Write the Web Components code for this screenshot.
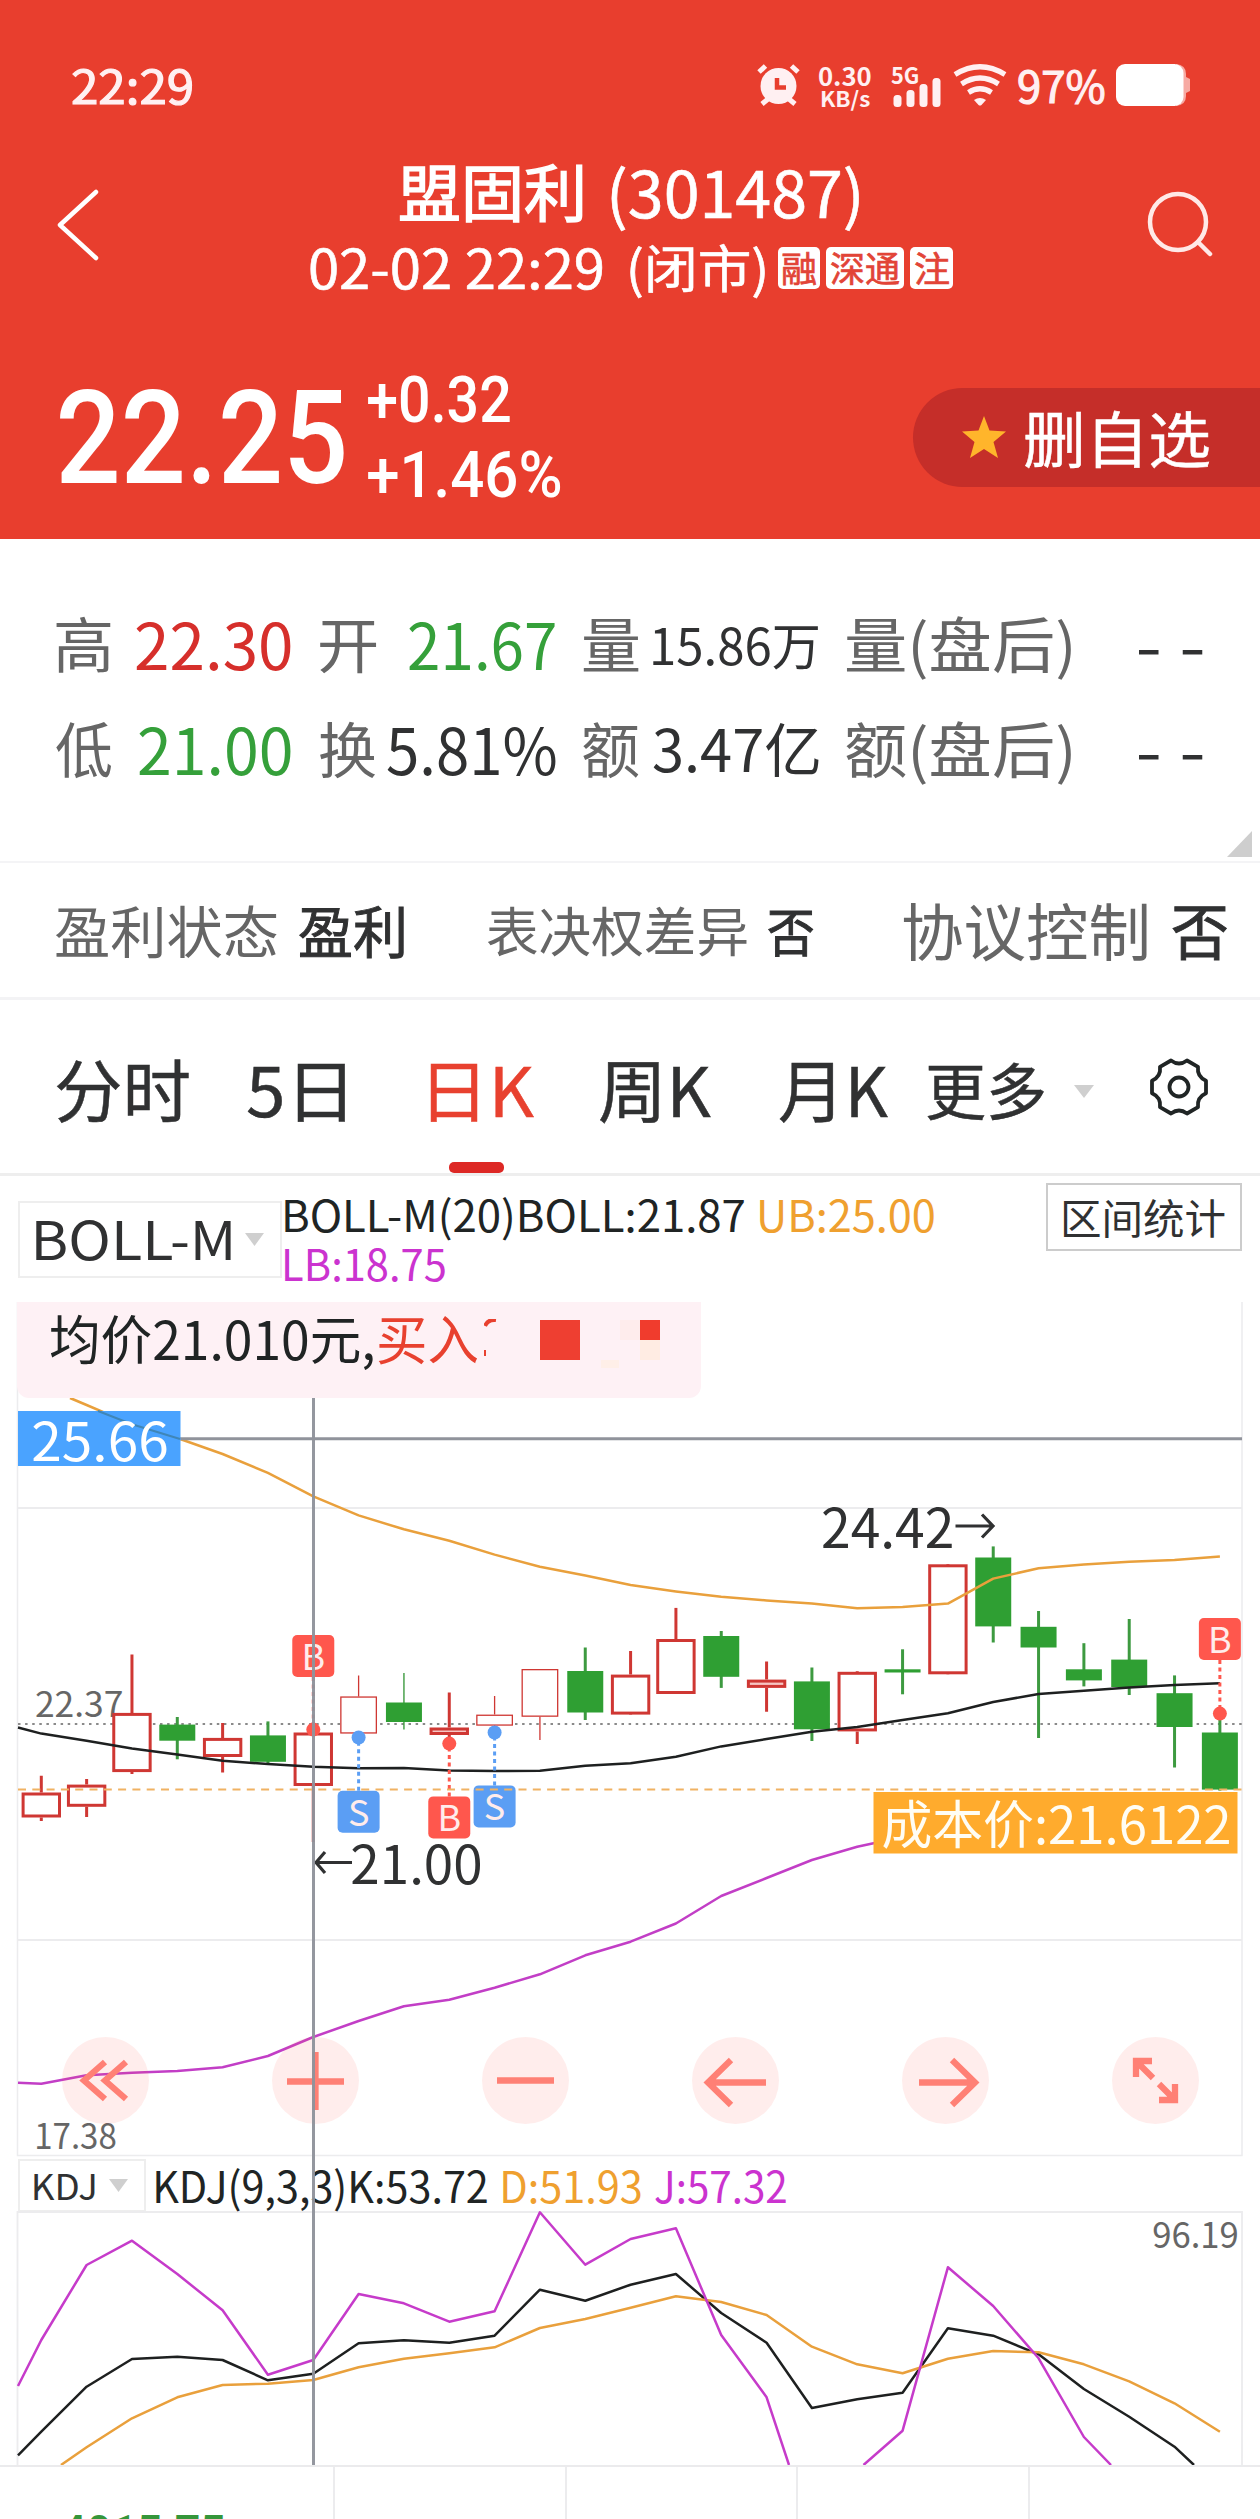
<!DOCTYPE html>
<html lang="zh-CN">
<head>
<meta charset="utf-8">
<title>盟固利 301487</title>
<style>
  html, body { margin: 0; padding: 0; }
  body {
    width: 1260px;
    height: 2519px;
    overflow: hidden;
    background: #fff;
    color: #303132;
    font-family: "Noto Sans CJK SC", "Noto Sans", sans-serif;
  }
</style>
</head>
<body>
<stock-page></stock-page>

<script>
// Text squeezed or stretched so that its ink is exactly "w" pixels wide
const measureCtx = document.createElement("canvas").getContext("2d");

class FitText extends HTMLElement {
  constructor() {
    super();
    this.attachShadow({ mode: "open" });
    this.shadowRoot.innerHTML = `
      <style>
        :host { display: block; flex: none; line-height: 1; white-space: nowrap; }
        span {
          display: inline-block;
          vertical-align: top;
          transform-origin: 0 50%;
        }
      </style>
      <span><slot></slot></span>
    `;
  }

  connectedCallback() {
    const width = parseFloat(this.getAttribute("w"));
    const gap = parseFloat(this.getAttribute("gap")) || 0;
    const size = this.getAttribute("size");
    if (size) this.style.fontSize = `${size}px`;
    if (gap) this.style.marginLeft = `${gap}px`;
    this.style.width = `${width}px`;

    const style = getComputedStyle(this);
    measureCtx.font = `${style.fontWeight} ${style.fontSize} ${style.fontFamily}`;
    const m = measureCtx.measureText(this.textContent);
    const scale = width / (m.actualBoundingBoxRight + m.actualBoundingBoxLeft);
    const shift = m.actualBoundingBoxLeft * scale;
    const lift = style.fontFamily.startsWith("Roboto") ? 0.012 : -0.045;
    this.shadowRoot.querySelector("span").style.transform =
      `translate(${shift}px, ${lift}em) scaleX(${scale})`;
  }
}
customElements.define("fit-text", FitText);

// Small helper: an element whose shadow root is a fixed template
function defineStatic(name, html) {
  const template = document.createElement("template");
  template.innerHTML = html;
  customElements.define(name, class extends HTMLElement {
    constructor() {
      super();
      this.attachShadow({ mode: "open" });
      this.shadowRoot.appendChild(template.content.cloneNode(true));
    }
  });
}

// Phone status bar
defineStatic("status-bar", `
  <style>
    :host {
      display: flex;
      align-items: center;
      height: 42px;
      padding: 64px 70px 0 72px;
      color: #fff0f2;
    }
    .mid { -webkit-text-stroke: 1.200px currentColor; }
    .right { display: flex; align-items: flex-start; margin-left: auto; height: 42px; }
    .rate { display: flex; flex-direction: column; margin-left: 19px; width: 53px; font-weight: 700; }
    .signal { margin-left: 19px; width: 51px; font-weight: 700; }
    .signal svg { display: block; margin-top: -9px; }
    .wifi { margin-left: 11px; }
    .battery { margin-left: 12px; }
    svg { display: block; flex: none; }
  </style>
  <fit-text class="mid" w="120" size="47">22:29</fit-text>
  <div class="right">
    <svg width="43" height="42" viewBox="0 0 43 42" fill="none" stroke="#fff0f2">
      <path d="M11 35 5 40M32 35l6 5M2 8 8.500 2M34.500 2 41 8" stroke-width="5"/>
      <circle cx="21.500" cy="22" r="18" fill="#fff0f2" stroke="none"/>
      <path d="M20 14v9.500h9" stroke="#e83e2e" stroke-width="4.500"/>
    </svg>
    <div class="rate">
      <fit-text w="52" size="25">0.30</fit-text>
      <fit-text w="49" size="21" gap="2">KB/s</fit-text>
    </div>
    <div class="signal">
      <fit-text w="27" size="23">5G</fit-text>
      <svg width="51" height="29" viewBox="0 0 51 29" fill="#fff0f2">
        <rect x="2.500" y="17" width="8" height="12" rx="3.500"/>
        <rect x="15.500" y="12" width="8" height="17" rx="3.500"/>
        <rect x="28.500" y="6" width="8" height="23" rx="3.500"/>
        <rect x="41.500" y="0" width="8" height="29" rx="3.500"/>
      </svg>
    </div>
    <svg class="wifi" width="54" height="42" viewBox="0 0 54 42" fill="none" stroke="#fff0f2" stroke-width="5.200">
      <path d="M2 10.500Q27-5 52 10.500M8.500 20Q27 8 45.500 20M15.500 28.500Q27 21 38.500 28.500"/>
      <path d="M21 36Q27 32 33 36L28.500 41Q27 42 25.500 41Z" fill="#fff0f2" stroke="none"/>
    </svg>
    <fit-text class="mid" w="86" size="44" gap="11">97%</fit-text>
    <svg class="battery" width="74" height="42" viewBox="0 0 74 42">
      <path d="M60 0q10 1 10 10v3l4 2v12l-4 2v3q0 9-10 10z" fill="#f7aaa3"/>
      <rect width="67.500" height="42" rx="9" fill="#fff"/>
    </svg>
  </div>
`);

// Red header: title, quote time and last price
defineStatic("quote-header", `
  <style>
    :host { display: block; height: 539px; background: #e83e2e; color: #fff; }
    .bar { display: flex; align-items: center; height: 237px; }
    .back { margin-left: 54px; }
    .search { margin-left: 191px; }
    svg { display: block; flex: none; }
    .title { width: 646px; margin-left: 208px; padding-top: 12px; }
    .line { display: flex; align-items: center; height: 75px; }
    .tag {
      display: flex; align-items: center; justify-content: center;
      height: 42px; margin-left: 6px;
      border-radius: 5px;
      background: #fff; color: #e24437;
      -webkit-text-stroke: 0.700px currentColor;
    }
    .quote { display: flex; align-items: center; height: 188px; padding: 0 0 8px 60px; font-family: Roboto, sans-serif; font-weight: 500; }
    .change { display: flex; flex-direction: column; gap: 10px; margin-left: 24px; }
    .fav {
      display: flex; align-items: center;
      box-sizing: border-box; width: 347px; height: 99px; margin-left: auto; padding-left: 49px;
      border-radius: 50px 0 0 50px;
      background: #c52e29;
      font-family: "Noto Sans CJK SC", sans-serif;
      font-weight: 400;
      -webkit-text-stroke: 0.500px currentColor;
    }
  </style>
  <status-bar></status-bar>
  <div class="bar">
    <svg class="back" width="48" height="74" viewBox="0 0 48 74" fill="none" stroke="#fff" stroke-width="4.500" stroke-linecap="round" stroke-linejoin="round"><path d="M42 4 6 37l36 33"/></svg>
    <div class="title">
      <div class="line">
        <fit-text w="182" size="62" gap="90" style="-webkit-text-stroke:1.500px currentColor">盟固利</fit-text>
        <fit-text w="248" size="64" gap="29" style="-webkit-text-stroke:0.600px currentColor">(301487)</fit-text>
      </div>
      <div class="line">
        <fit-text w="293" size="54" style="-webkit-text-stroke:0.600px currentColor">02-02 22:29</fit-text>
        <fit-text w="135" size="51" gap="27" style="-webkit-text-stroke:0.600px currentColor">(闭市)</fit-text>
        <span class="tag" style="width:42px;margin-left:13px"><fit-text w="34" size="35">融</fit-text></span>
        <span class="tag" style="width:78px"><fit-text w="68" size="35">深通</fit-text></span>
        <span class="tag" style="width:43px"><fit-text w="34" size="35">注</fit-text></span>
      </div>
    </div>
    <svg class="search" width="68" height="68" viewBox="0 0 68 68" fill="none" stroke="#ffe9e7" stroke-width="4.500" stroke-linecap="round"><circle cx="31" cy="31" r="28"/><path d="M51 51 63 63"/></svg>
  </div>
  <div class="quote">
    <fit-text w="284" size="130">22.25</fit-text>
    <div class="change">
      <fit-text w="142" size="65">+0.32</fit-text>
      <fit-text w="192" size="65">+1.46%</fit-text>
    </div>
    <div class="fav">
      <svg width="44" height="42" viewBox="0 0 44 42" fill="#ffb52b"><path d="M22 0 27.500 14.500 44 15.500 31.500 26 36 42 22 33 8 42 12.500 26 0 15.500 16.500 14.500Z"/></svg>
      <fit-text w="184" size="61" gap="19" style="padding-top:4px">删自选</fit-text>
    </div>
  </div>
`);

// High / low / open / volume figures
defineStatic("quote-stats", `
  <style>
    :host { display: block; position: relative; box-sizing: border-box; height: 322px; padding: 53px 0 0 56px; }
    .row { display: flex; align-items: center; height: 105px; color: #303132; }
    .k { color: #666; }
    .up { color: #d62f2b; }
    .down { color: #35a03a; }
    .more { position: absolute; right: 8px; bottom: 4px; }
  </style>
  <div class="row">
    <fit-text class="k" w="55" size="60">高</fit-text>
    <fit-text class="up" w="155" size="64" gap="25">22.30</fit-text>
    <fit-text class="k" w="56" size="60" gap="29">开</fit-text>
    <fit-text class="down" w="146" size="64" gap="33">21.67</fit-text>
    <fit-text class="k" w="56" size="60" gap="28">量</fit-text>
    <fit-text w="165" size="50" gap="14">15.86万</fit-text>
    <fit-text class="k" w="225" size="60" gap="28">量(盘后)</fit-text>
    <fit-text w="65" size="64" gap="67">- -</fit-text>
  </div>
  <div class="row">
    <fit-text class="k" w="56" size="60">低</fit-text>
    <fit-text class="down" w="152" size="64" gap="27">21.00</fit-text>
    <fit-text class="k" w="56" size="60" gap="29">换</fit-text>
    <fit-text w="169" size="64" gap="11">5.81%</fit-text>
    <fit-text class="k" w="56" size="60" gap="27">额</fit-text>
    <fit-text w="166" size="58" gap="14">3.47亿</fit-text>
    <fit-text class="k" w="225" size="60" gap="27">额(盘后)</fit-text>
    <fit-text w="65" size="64" gap="67">- -</fit-text>
  </div>
  <svg class="more" width="25" height="26"><path d="M25 0v26H0z" fill="#cecece"/></svg>
`);

defineStatic("company-flags", `
  <style>
    :host {
      display: flex; align-items: center;
      box-sizing: border-box; height: 139px; padding: 3px 0 0 55px;
      border-top: 2px solid #f4f4f6; border-bottom: 3px solid #f3f3f5;
      color: #303132;
    }
    .k { color: #666; }
    .v { -webkit-text-stroke: 1px currentColor; }
  </style>
  <fit-text class="k" w="222" size="56">盈利状态</fit-text>
  <fit-text class="v" w="105" size="56" gap="22">盈利</fit-text>
  <fit-text class="k" w="260" size="53" gap="83">表决权差异</fit-text>
  <fit-text class="v" w="45" size="52" gap="21">否</fit-text>
  <fit-text class="k" w="244" size="62" gap="90">协议控制</fit-text>
  <fit-text class="v" w="54" size="61" gap="26">否</fit-text>
`);

defineStatic("period-tabs", `
  <style>
    :host {
      display: flex; align-items: center; position: relative;
      box-sizing: border-box; height: 176px; padding: 9px 0 0 56px;
      border-bottom: 3px solid #eee;
      color: #303132;
      -webkit-text-stroke: 0.500px currentColor;
    }
    .on { color: #e8412f; }
    .on::after {
      content: "";
      position: absolute; left: 449px; bottom: 0;
      width: 55px; height: 11px; border-radius: 5px;
      background: #dd2825;
    }
    svg { display: block; flex: none; }
  </style>
  <fit-text w="133" size="68">分时</fit-text>
  <fit-text w="98" size="68" gap="58">5日</fit-text>
  <div class="on"><fit-text w="104" size="68" gap="85">日K</fit-text></div>
  <fit-text w="111" size="68" gap="66">周K</fit-text>
  <fit-text w="109" size="68" gap="68">月K</fit-text>
  <fit-text w="117" size="61" gap="39">更多</fit-text>
  <svg style="margin-left:30px" width="20" height="13"><path d="M0 0h20L10 13z" fill="#cfcfcf"/></svg>
  <svg style="margin-left:55px;margin-top:-8px" width="60" height="60" viewBox="-30 -30 60 60" fill="none" stroke="#202525" stroke-width="3.800" stroke-linejoin="round">
    <circle r="9.500"/>
    <path d="M-8-26.500Q0-20.500 8-26.500L19-20.200Q17.800-10.300 27-6.300V6.300Q17.800 10.300 19 20.200L8 26.500Q0 20.500-8 26.500L-19 20.200Q-17.800 10.300-27 6.300V-6.300Q-17.800-10.300-19-20.200Z"/>
  </svg>
`);

// Framed indicator name with a drop-down mark
class IndicatorSelect extends HTMLElement {
  constructor() {
    super();
    this.attachShadow({ mode: "open" });
    this.shadowRoot.innerHTML = `
      <style>
        :host {
          display: flex; align-items: center; flex: none;
          box-sizing: border-box;
          border: 2px solid #eee;
          background: #fff;
          color: #303132;
        }
        svg { display: block; margin-left: 14px; }
      </style>
      <slot></slot>
      <svg width="19" height="13"><path d="M0 0h19L9.500 13z" fill="#cfcfcf"/></svg>
    `;
  }
}
customElements.define("indicator-select", IndicatorSelect);

const PITCH = 45.33;
const FIRST_X = 41.3;
const RED = "#cf3733";
const GREEN = "#2f9f33";
const cx = (i) => FIRST_X + PITCH * i;

// ys holds one y value per candle, counted from "start"
function polyline(ys, color, start = 0, before = "", after = "", width = 2.5) {
  const pts = ys.map((y, i) => `${cx(i + start).toFixed(1)},${y}`).join(" ");
  return `<polyline points="${before} ${pts} ${after}" fill="none" stroke="${color}" stroke-width="${width}" stroke-linejoin="round"/>`;
}

function label(x, y, w, size, text, color = "#303132") {
  return `<text x="${x - size * 0.05}" y="${y}" font-size="${size}" fill="${color}" textLength="${w + size * 0.1}" lengthAdjust="spacingAndGlyphs">${text}</text>`;
}

// [kind, body top, body bottom, high, low]; r = red, g = green, t = thin red, G = green with a thin wick
const CANDLES = [
  ["r", 1792.5, 1817.5, 1775.7, 1821], ["r", 1784.6, 1806.8, 1779, 1817],
  ["r", 1712.9, 1772.1, 1654.6, 1774], ["g", 1724.6, 1740.7, 1717, 1759.3],
  ["r", 1737.9, 1757, 1723, 1772.5], ["g", 1735.4, 1761.8, 1721.4, 1763],
  ["r", 1732.5, 1786, 1732, 1842], ["t", 1696.4, 1733.6, 1675.4, 1733],
  ["G", 1702.5, 1722, 1673, 1729.6], ["r", 1727.5, 1735, 1692.5, 1737],
  ["t", 1714.6, 1725.7, 1696, 1725], ["t", 1669, 1716.8, 1669, 1740],
  ["g", 1671, 1712.5, 1647.5, 1720], ["r", 1674.6, 1714.6, 1651, 1714],
  ["r", 1639, 1694, 1607.9, 1694], ["g", 1636, 1676.8, 1631, 1687.9],
  ["r", 1679.6, 1687.9, 1661.4, 1711.8], ["g", 1681.4, 1729.3, 1667.5, 1741],
  ["r", 1671.8, 1731.4, 1671, 1744], ["g", 1669.3, 1672.5, 1649.3, 1694.3],
  ["r", 1564.3, 1674.3, 1565, 1674], ["g", 1557.5, 1626.4, 1546.4, 1642.5],
  ["g", 1626.8, 1647.5, 1611, 1738], ["g", 1669.3, 1680.4, 1643.2, 1686.4],
  ["g", 1659.6, 1687, 1619, 1695], ["g", 1693.2, 1727, 1675.4, 1767.5],
  ["g", 1732.5, 1789.6, 1718, 1790.7],
];

const BOLL_UP = [1405, 1424.3, 1438, 1454, 1472.9, 1496.4, 1515.4, 1529.3, 1540.7, 1554.6, 1566.8, 1575.4, 1585, 1591.4, 1596.8, 1600.4, 1603.6, 1608.2, 1607, 1603.6, 1578.6, 1568.2, 1564.6, 1561.8, 1560, 1556.4];
const BOLL_MID = [1733.6, 1740.7, 1748.6, 1754.6, 1760.7, 1764, 1766.8, 1768.2, 1767.9, 1770.4, 1771, 1770.7, 1765.7, 1763.2, 1756.8, 1746.4, 1739, 1731.8, 1727, 1720, 1713.2, 1702, 1694, 1690.7, 1687.5, 1685, 1683.2];
const BOLL_LOW = [2083.7, 2075.3, 2072.7, 2071, 2067.3, 2056, 2037, 2021, 2006.3, 1999.7, 1987.7, 1974.3, 1955.3, 1941.7, 1923.5, 1896, 1878, 1860, 1846.8, 1837];

// candle index, letter, badge top, dot y
const TRADES = [[6, "B", 1635, 1729.6], [7, "S", 1790.7, 1737.5], [9, "B", 1796.4, 1743.6], [10, "S", 1785.4, 1732.5], [26, "B", 1618, 1713.6]];

function candle([kind, top, bottom, high, low], i) {
  const x = cx(i);
  if (kind === "g" || kind === "G") {
    const wick = kind === "G" ? 1.4 : 3;
    return `<path d="M${x} ${high}V${low}" stroke="#3d9a40" stroke-width="${wick}"/>
      <rect x="${x - 18}" y="${top}" width="36" height="${bottom - top}" fill="${GREEN}"/>`;
  }
  const sw = kind === "t" ? 1.3 : 3;
  const half = (kind === "t" ? 36.8 : 39.4) / 2;
  const fill = bottom - top < 9 ? "#f6c5c2" : "#fff";
  return `<path d="M${x} ${high}V${top}M${x} ${bottom}V${low}" stroke="${RED}" stroke-width="${sw}"/>
    <rect x="${x - half + sw / 2}" y="${top + sw / 2}" width="${half * 2 - sw}" height="${bottom - top - sw}" fill="${fill}" stroke="${RED}" stroke-width="${sw}"/>`;
}

function trade([i, letter, top, dot]) {
  const x = cx(i);
  const color = letter === "B" ? "#ff574d" : "#5b9ef4";
  const from = top < dot ? top + 42 : top;
  return `<path d="M${x} ${from}V${dot}" stroke="${color}" stroke-width="3" stroke-dasharray="4 3.500"/>
    <circle cx="${x}" cy="${dot}" r="7" fill="${color}"/>
    <rect x="${x - 21}" y="${top}" width="42" height="42" rx="5" fill="${color}"/>
    <text x="${x}" y="${top + 35}" font-size="36" text-anchor="middle" fill="#ffeceb">${letter}</text>`;
}

class KlineChart extends HTMLElement {
  constructor() {
    super();
    this.attachShadow({ mode: "open" });
    this.shadowRoot.innerHTML = `
      <style>
        :host { display: block; position: relative; height: 857px; }
        svg { display: block; flex: none; }
        .tip {
          position: absolute; left: 17px; top: 0;
          box-sizing: border-box; width: 684px; height: 96px;
          display: flex; align-items: flex-start; padding: 11px 0 0 33px;
          border-radius: 0 0 12px 12px;
          background: #fef1f5;
        }
        .tip .buy { color: #e8412f; }
        .tools {
          position: absolute; left: 62px; top: 734.500px; width: 1137px;
          display: flex; justify-content: space-between;
        }
        .tools svg { border-radius: 50%; background: rgba(253, 90, 80, 0.11); }
      </style>
      <svg width="1260" height="857" viewBox="0 1302 1260 857" font-family="'Noto Sans CJK SC', sans-serif">
        <path d="M17.500 1302V2155.500H1242V1302" fill="none" stroke="#ececee" stroke-width="1.500"/>
        <path d="M18 1508H1242M18 1940H1242" stroke="#ececee" stroke-width="2"/>
        <path d="M18 1724H1242" stroke="#8a8a8a" stroke-width="2" stroke-dasharray="2.500 4.600"/>
        ${label(36.7, 1717, 85, 35, "22.37", "#666")}
        ${CANDLES.map(candle).join("")}
        ${polyline(BOLL_MID, "#1e2020", 0, "18,1727.500")}
        ${polyline(BOLL_UP, "#e9a03c", 1, "70,1398")}
        ${polyline(BOLL_LOW, "#c23ec6", 0, "18,2082.700")}
        ${TRADES.map(trade).join("")}
        <path d="M18 1789.500H1242" stroke="#f0b263" stroke-width="2" stroke-dasharray="8 6.300"/>
        <path d="M180 1438.700H1242" stroke="#90939b" stroke-width="3"/>
        <rect x="18" y="1411" width="162.500" height="55" fill="#4aa3ff"/>
        <path d="M98 1411 132 1424.300 180 1439" fill="none" stroke="#3f86b8" stroke-width="2"/>
        ${label(34, 1461, 132, 53, "25.66", "#fff")}
        ${label(823.7, 1547.5, 128, 54, "24.42")}
        <path d="M955.500 1526H993M982 1514.500 993 1526 982 1537.500M352 1862.500H316M325 1852 316 1862.500 325 1873" fill="none" stroke="#303132" stroke-width="3.200"/>
        ${label(353, 1884, 127, 53, "21.00")}
        <rect x="873.500" y="1792" width="364" height="61.500" fill="#ffab2d"/>
        ${label(884, 1844, 345, 52, "成本价:21.6122", "#fffdf4")}
        ${label(36, 2149, 79, 35, "17.38", "#666")}
      </svg>
      <div class="tip">
        <fit-text w="323" size="53">均价21.010元,</fit-text>
        <fit-text class="buy" w="100" size="53" gap="5">买入</fit-text>
        <svg style="margin:6px 0 0 6px" width="180" height="60" fill="none">
          <path d="M1 7Q4 0 12 1" stroke="#e8412f" stroke-width="4"/>
          <path d="M1 31v6" stroke="#e8412f" stroke-width="2"/>
          <path d="M56 1h40v40H56z" fill="#ee3f31"/>
          <path d="M136 1h20v20h-20z" fill="#feecec"/>
          <path d="M156 1h20v20h-20z" fill="#f03c2d"/>
          <path d="M156 21h20v20h-20z" fill="#ffece3"/>
          <path d="M117 41h18v8h-18z" fill="#ffefe8"/>
        </svg>
      </div>
      <div class="tools">${this.tools()}</div>
    `;
  }

  tools() {
    const icons = [
      "M43 25 22 43.500 43 62M64 25 43 43.500 64 62",
      "M43.500 15V73M15 44.500H72",
      "M15 43.500H72",
      "M39 23 16 45.500 39 68M16 45.500H74",
      "M50 23 73 45.500 50 68M73 45.500H17",
      "M41 41 24 24M24 40V24H40M47 47 63 63M63 47V63H47",
    ];
    return icons.map((d) => `
      <svg width="87" height="87" viewBox="0 0 87 87" fill="none" stroke="#ff8075" stroke-width="6.300"><path d="${d}"/></svg>`).join("");
  }
}
customElements.define("kline-chart", KlineChart);

const J1 = [2340, 2265, 2240.7, 2274, 2310.3, 2374.7, 2360, 2294, 2303.3, 2321.7, 2311.3, 2212.3, 2264.7, 2239, 2228.3, 2335, 2397.3];
const J2 = [2430.7, 2267.3, 2306, 2358.3, 2437];
const K = [2431.7, 2386.7, 2359, 2356.7, 2360, 2380.3, 2373.7, 2343.3, 2340.3, 2342.7, 2335.7, 2289.7, 2300.7, 2284.7, 2274, 2313, 2342.7, 2408, 2399.3, 2392.7, 2328.3, 2335.7, 2354.3, 2389, 2416.7, 2446.7];
const D = [2447.3, 2418.3, 2397.3, 2385, 2383.7, 2380, 2367.3, 2358.7, 2353.3, 2347.3, 2328, 2319, 2307.7, 2296.3, 2302, 2315, 2346.7, 2364.3, 2373.3, 2358.7, 2351, 2352.3, 2364.3, 2381.3, 2403.3, 2431.7];

class KdjChart extends HTMLElement {
  constructor() {
    super();
    this.attachShadow({ mode: "open" });
    this.shadowRoot.innerHTML = `
      <style>
        :host { display: block; border-bottom: 2px solid #ebebed; }
        .legend { display: flex; align-items: center; height: 52px; padding-left: 18px; font-size: 43px; }
        .legend > fit-text { padding-top: 2px; }
        .d { color: #efa02f; }
        .j { color: #cb33cf; }
        svg { display: block; }
      </style>
      <div class="legend">
        <indicator-select style="width:128px;height:53px;padding-left:14px"><fit-text w="61" size="35" style="padding-top:2px">KDJ</fit-text></indicator-select>
        <fit-text w="331" gap="10">KDJ(9,3,3)K:53.72</fit-text>
        <fit-text class="d" w="138" gap="16">D:51.93</fit-text>
        <fit-text class="j" w="131" gap="14">J:57.32</fit-text>
      </div>
      <svg width="1260" height="254" viewBox="0 2211 1260 254" font-family="'Noto Sans CJK SC', sans-serif">
        <path d="M17.500 2465V2212H1242V2465" fill="none" stroke="#ececee" stroke-width="1.800"/>
        ${polyline(K, "#1e2020", 0, "18,2455.300", "1194,2465")}
        ${polyline(D, "#e9a03c", 1, "61,2465")}
        ${polyline(J1, "#c63bca", 0, "18,2386", "789,2465")}
        ${polyline(J2, "#c63bca", 19, "863.500,2465", "1111,2465")}
        ${label(1154, 2248, 83, 36, "96.19", "#666")}
      </svg>
    `;
  }
}
customElements.define("kdj-chart", KdjChart);

defineStatic("chart-panel", `
  <style>
    :host { display: block; position: relative; color: #202424; }
    .head { display: flex; align-items: flex-start; height: 126px; font-size: 43px; }
    .legend { display: flex; flex-wrap: wrap; width: 761px; padding: 18px 0 0 3px; }
    .row { display: flex; height: 49px; width: 100%; }
    .ub { color: #efa02f; }
    .lb { color: #cb33cf; }
    .range {
      display: flex; align-items: center; justify-content: center;
      box-sizing: border-box; width: 196px; height: 68px; margin-top: 7px;
      padding-top: 2px;
      border: 2px solid #ccc;
      color: #303132;
    }
    /* crosshair runs through both charts */
    .cross { position: absolute; left: 312px; top: 222px; bottom: 2px; width: 3px; background: #90939b; opacity: 0.96; }
  </style>
  <div class="head">
    <indicator-select style="width:264px;height:77px;margin:25px 0 0 18px;padding-left:16px"><fit-text w="195" size="53">BOLL-M</fit-text></indicator-select>
    <div class="legend">
      <div class="row"><fit-text w="459">BOLL-M(20)BOLL:21.87</fit-text><fit-text class="ub" w="174" gap="16">UB:25.00</fit-text></div>
      <div class="row"><fit-text class="lb" w="160">LB:18.75</fit-text></div>
    </div>
    <div class="range"><fit-text w="162" size="41">区间统计</fit-text></div>
  </div>
  <kline-chart></kline-chart>
  <kdj-chart></kdj-chart>
  <div class="cross"></div>
`);

defineStatic("index-strip", `
  <style>
    :host { display: flex; height: 52px; overflow: hidden; color: #35963a; }
    .cell { box-sizing: border-box; flex: none; width: 231.700px; border-right: 2px solid #ececee; }
    .cell.first { width: 335px; padding: 41px 0 0 62px; }
    .cell:last-child { border: 0; }
  </style>
  <div class="cell first"><fit-text w="162" size="50" style="font-weight:700;font-family:Roboto,sans-serif">4015.75</fit-text></div>
  <div class="cell"></div>
  <div class="cell"></div>
  <div class="cell"></div>
  <div class="cell"></div>
`);

defineStatic("stock-page", `
  <style>
    :host { display: flex; flex-direction: column; width: 1260px; height: 2519px; overflow: hidden; }
  </style>
  <quote-header></quote-header>
  <quote-stats></quote-stats>
  <company-flags></company-flags>
  <period-tabs></period-tabs>
  <chart-panel></chart-panel>
  <index-strip></index-strip>
`);
</script>
</body>
</html>
